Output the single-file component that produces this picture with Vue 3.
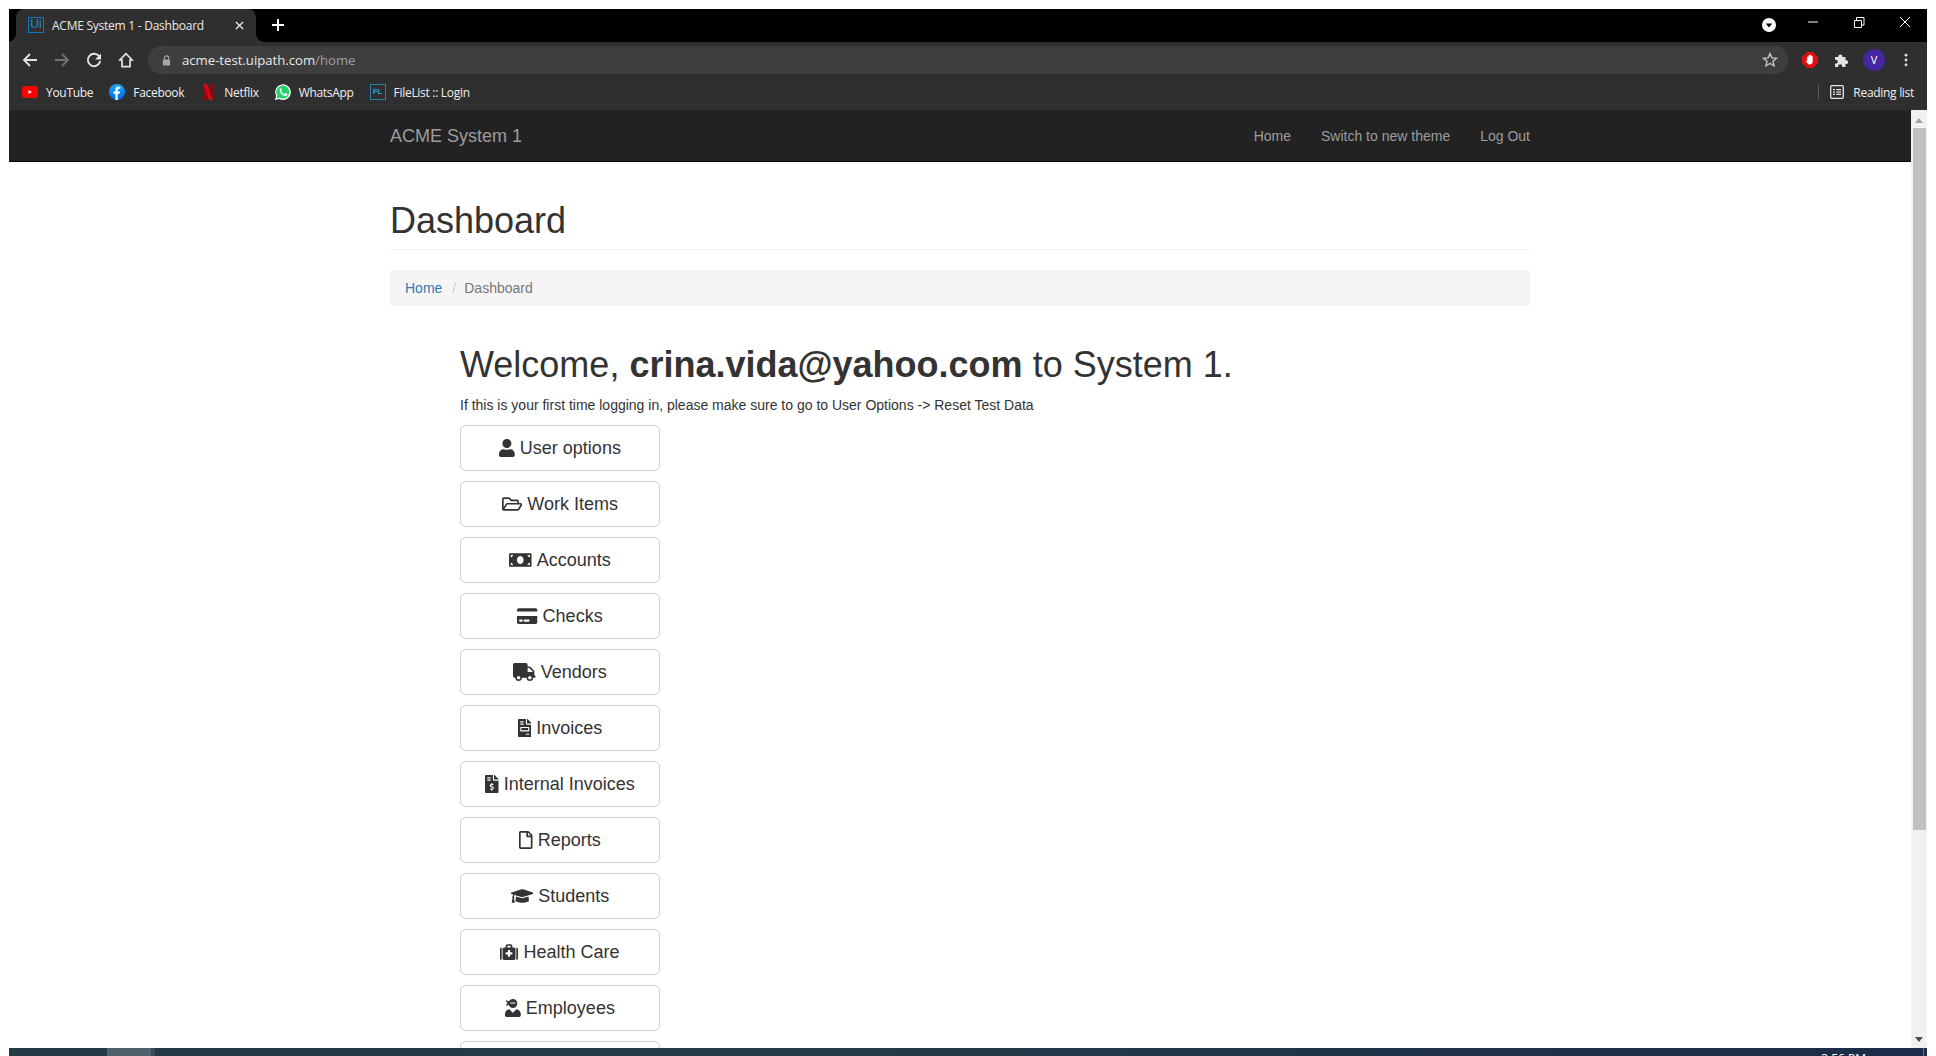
<script setup>
const icons = {
  user: { v: '0 0 448 512', d: 'M224 256c70.7 0 128-57.3 128-128S294.7 0 224 0 96 57.3 96 128s57.3 128 128 128zm89.6 32h-16.7c-22.2 10.2-46.9 16-72.9 16s-50.6-5.8-72.9-16h-16.7C60.2 288 0 348.2 0 422.4V464c0 26.5 21.5 48 48 48h352c26.5 0 48-21.5 48-48v-41.6c0-74.2-60.2-134.4-134.4-134.4z' },
  folder: { v: '0 0 576 512', d: 'M527.9 224H480v-48c0-26.5-21.5-48-48-48H272l-64-64H48C21.5 64 0 85.5 0 112v288c0 26.5 21.5 48 48 48h400c16.5 0 31.9-8.5 40.7-22.6l79.9-128c20-31.9-3-73.4-40.7-73.4zM48 118c0-3.3 2.7-6 6-6h134.1l64 64H426c3.3 0 6 2.7 6 6v42H152c-16.8 0-32.4 8.8-41.1 23.2L48 351.4zm400 282H72l77.2-128H528z' },
  money: { v: '0 0 640 512', d: 'M608 64H32C14.33 64 0 78.33 0 96v320c0 17.67 14.33 32 32 32h576c17.67 0 32-14.33 32-32V96c0-17.67-14.33-32-32-32zM48 400v-64c35.35 0 64 28.65 64 64H48zm0-224v-64h64c0 35.35-28.65 64-64 64zm272 192c-53.02 0-96-50.15-96-112 0-61.86 42.98-112 96-112s96 50.14 96 112c0 61.87-43 112-96 112zm272 32h-64c0-35.35 28.65-64 64-64v64zm0-224c-35.35 0-64-28.65-64-64h64v64z' },
  card: { v: '0 0 576 512', d: 'M0 432c0 26.5 21.5 48 48 48h480c26.5 0 48-21.5 48-48V256H0v176zm192-68c0-6.6 5.4-12 12-12h136c6.6 0 12 5.4 12 12v40c0 6.6-5.4 12-12 12H204c-6.6 0-12-5.4-12-12v-40zm-128 0c0-6.6 5.4-12 12-12h72c6.6 0 12 5.4 12 12v40c0 6.6-5.4 12-12 12H76c-6.6 0-12-5.4-12-12v-40zM576 80v48H0V80c0-26.5 21.5-48 48-48h480c26.5 0 48 21.5 48 48z' },
  truck: { v: '0 0 640 512', d: 'M624 352h-16V243.9c0-12.7-5.1-24.9-14.1-33.9L494 110.1c-9-9-21.2-14.1-33.9-14.1H416V48c0-26.5-21.5-48-48-48H48C21.5 0 0 21.5 0 48v320c0 26.5 21.5 48 48 48h16c0 53 43 96 96 96s96-43 96-96h128c0 53 43 96 96 96s96-43 96-96h48c8.8 0 16-7.2 16-16v-32c0-8.8-7.2-16-16-16zM160 464c-26.5 0-48-21.5-48-48s21.5-48 48-48 48 21.5 48 48-21.5 48-48 48zm320 0c-26.5 0-48-21.5-48-48s21.5-48 48-48 48 21.5 48 48-21.5 48-48 48zm80-208H416V144h44.1l99.9 99.9V256z' },
  invoice: { v: '0 0 384 512', d: 'M288 256H96v64h192v-64zm89-151L279.1 7c-4.5-4.5-10.6-7-17-7H256v128h128v-6.1c0-6.3-2.5-12.4-7-16.9zm-153 31V0H24C10.7 0 0 10.7 0 24v464c0 13.3 10.7 24 24 24h336c13.3 0 24-10.7 24-24V160H248c-13.2 0-24-10.8-24-24zM64 72c0-4.42 3.58-8 8-8h80c4.42 0 8 3.58 8 8v16c0 4.42-3.58 8-8 8H72c-4.42 0-8-3.58-8-8V72zm0 64c0-4.42 3.58-8 8-8h80c4.42 0 8 3.58 8 8v16c0 4.42-3.58 8-8 8H72c-4.42 0-8-3.58-8-8v-16zm256 304c0 4.42-3.58 8-8 8h-80c-4.42 0-8-3.58-8-8v-16c0-4.42 3.58-8 8-8h80c4.42 0 8 3.58 8 8v16zm0-200v96c0 8.84-7.16 16-16 16H80c-8.84 0-16-7.16-16-16v-96c0-8.84 7.16-16 16-16h224c8.84 0 16 7.16 16 16z' },
  invoiceDollar: { v: '0 0 384 512', d: 'M377 105L279.1 7c-4.5-4.5-10.6-7-17-7H256v128h128v-6.1c0-6.3-2.5-12.4-7-16.9zm-153 31V0H24C10.7 0 0 10.7 0 24v464c0 13.3 10.7 24 24 24h336c13.3 0 24-10.7 24-24V160H248c-13.2 0-24-10.8-24-24zM64 72c0-4.42 3.58-8 8-8h80c4.42 0 8 3.58 8 8v16c0 4.42-3.58 8-8 8H72c-4.42 0-8-3.58-8-8V72zm0 80v-16c0-4.42 3.58-8 8-8h80c4.42 0 8 3.58 8 8v16c0 4.42-3.58 8-8 8H72c-4.42 0-8-3.58-8-8zm144 263.88V440c0 4.42-3.58 8-8 8h-16c-4.42 0-8-3.58-8-8v-24.29c-11.29-.58-22.27-4.52-31.37-11.35-3.9-2.93-4.1-8.77-.57-12.14l11.75-11.21c2.77-2.64 6.89-2.76 10.13-.73 3.87 2.42 8.26 3.72 12.82 3.72h28.11c6.5 0 11.8-5.92 11.8-13.19 0-5.95-3.61-11.19-8.77-12.73l-45-13.5c-18.59-5.58-31.58-23.42-31.58-43.39 0-24.52 19.05-44.44 42.67-45.07V232c0-4.42 3.58-8 8-8h16c4.42 0 8 3.58 8 8v24.29c11.29.58 22.27 4.51 31.37 11.35 3.9 2.93 4.1 8.77.57 12.14l-11.75 11.21c-2.77 2.64-6.89 2.76-10.13.73-3.87-2.43-8.26-3.72-12.82-3.72h-28.11c-6.5 0-11.8 5.92-11.8 13.19 0 5.95 3.61 11.19 8.77 12.73l45 13.5c18.59 5.58 31.58 23.42 31.58 43.39 0 24.53-19.05 44.44-42.67 45.07z' },
  file: { v: '0 0 384 512', d: 'M369.9 97.9L286 14C277 5 264.8-.1 252.1-.1H48C21.5 0 0 21.5 0 48v416c0 26.5 21.5 48 48 48h288c26.5 0 48-21.5 48-48V131.9c0-12.7-5.1-25-14.1-34zM332.1 128H256V51.9l76.1 76.1zM48 464V48h160v104c0 13.3 10.7 24 24 24h104v288H48z' },
  cap: { v: '0 0 640 512', d: 'M622.34 153.2L343.4 67.5c-15.2-4.67-31.6-4.67-46.79 0L17.66 153.2c-23.54 7.23-23.54 38.36 0 45.59l48.63 14.94c-10.67 13.19-17.23 29.28-17.88 46.9C38.78 266.15 32 276.11 32 288c0 10.78 5.68 19.85 13.86 25.65L20.33 428.53C18.11 438.52 25.71 448 35.94 448h56.11c10.24 0 17.84-9.48 15.62-19.47L82.14 313.65C90.32 307.85 96 298.78 96 288c0-11.57-6.47-21.25-15.66-26.87.76-15.02 8.44-28.3 20.69-36.72L296.6 284.5c9.06 2.78 26.44 6.25 46.79 0l278.95-85.7c23.55-7.24 23.55-38.36 0-45.6zM352.79 315.09c-28.53 8.76-52.84 3.92-65.59 0l-145.02-44.55L128 384c0 35.35 85.96 64 192 64s192-28.65 192-64l-14.18-113.47-145.03 44.56z' },
  care: { v: '0 0 512 512', d: 'M0 176c0-26 20-48 48-48v352c-28 0-48-22-48-48zM464 128c28 0 48 22 48 48v256c0 26-20 48-48 48zM160 128V80c0-26 22-48 48-48h96c26 0 48 22 48 48v48h48c20 0 40 20 40 48v256c0 28-20 48-40 48H112c-20 0-40-20-40-48V176c0-28 20-48 40-48zm48-48v48h96V80zm16 120v64h-64v64h64v64h64v-64h64v-64h-64v-64z' },
  ninja: { v: '0 0 448 512', d: 'M325.4 289.2L224 390.6 122.6 289.2C54 295.3 0 352.2 0 422.4V464c0 26.5 21.5 48 48 48h352c26.5 0 48-21.5 48-48v-41.6c0-70.2-54-127.1-122.6-133.2zM32 192c27.3 0 51.8-11.5 69.2-29.7 15.1 53.9 64 93.7 122.8 93.7 70.7 0 128-57.3 128-128S294.7 0 224 0c-50.4 0-93.6 29.4-114.5 71.8C92.1 47.8 64 32 32 32c0 33.4 17.1 62.8 43.1 80-26 17.2-43.1 46.6-43.1 80zm144-96h96c17.7 0 32 14.3 32 32H144c0-17.7 14.3-32 32-32z' }
}
const buttons = [
  { label: 'User options', icon: 'user' },
  { label: 'Work Items', icon: 'folder' },
  { label: 'Accounts', icon: 'money' },
  { label: 'Checks', icon: 'card' },
  { label: 'Vendors', icon: 'truck' },
  { label: 'Invoices', icon: 'invoice' },
  { label: 'Internal Invoices', icon: 'invoiceDollar' },
  { label: 'Reports', icon: 'file' },
  { label: 'Students', icon: 'cap' },
  { label: 'Health Care', icon: 'care' },
  { label: 'Employees', icon: 'ninja' },
  { label: '', icon: null }
]
</script>

<template>
  <div class="window">
    <div class="tabstrip">
      <div class="tab">
        <span class="favicon">Ui</span>
        <span class="tab-title">ACME System 1 - Dashboard</span>
        <svg class="tab-close" viewBox="0 0 10 10"><path d="M1 1l8 8M9 1l-8 8" /></svg>
      </div>
      <svg class="newtab" viewBox="0 0 12 12"><path d="M6 0v12M0 6h12" /></svg>
      <div class="strip-right">
        <svg class="tabsearch" viewBox="0 0 14 14"><circle cx="7" cy="7" r="7" fill="#fff" /><path d="M3.8 5.6h6.4L7 9.4z" fill="#000" /></svg>
        <svg class="win-btn" viewBox="-1 0 46 30"><path d="M18 13h10" stroke="#fff" fill="none" /></svg>
        <svg class="win-btn" viewBox="-1 0 46 30"><path d="M18.5 11.5h7v7h-7zM20.5 11.5v-3h7.500v7.500h-2.500" stroke="#fff" fill="none" /></svg>
        <svg class="win-btn" viewBox="-1 0 46 30"><path d="M18 8l10 10M28 8L18 18" stroke="#fff" fill="none" /></svg>
      </div>
    </div>

    <div class="toolbar">
      <svg class="nav" viewBox="0 0 16 16"><path d="M15 8H2.500M8 2L2 8l6 6" fill="none" stroke="#e4e4e4" stroke-width="1.800" /></svg>
      <svg class="nav" viewBox="0 0 16 16"><path d="M1 8h12.500M8 2l6 6-6 6" fill="none" stroke="#737373" stroke-width="1.800" /></svg>
      <svg class="nav" viewBox="0 0 16 16"><path d="M13.300 4.600A6.200 6.200 0 1 0 14.200 9" fill="none" stroke="#e4e4e4" stroke-width="1.900" /><path d="M15 1.500v6H9z" fill="#e4e4e4" /></svg>
      <svg class="nav" viewBox="0 0 16 16"><path d="M8 1.600L1.800 8H4v6.600h8V8h2.200z" fill="none" stroke="#e4e4e4" stroke-width="1.700" stroke-linejoin="miter" /></svg>
      <div class="omnibox">
        <svg class="lock" viewBox="0 0 10 12"><path d="M2.500 5V3.400a2.500 2.500 0 0 1 5 0V5" fill="none" stroke="#a8a8a8" stroke-width="1.300" /><rect x="1" y="5" width="8" height="6.500" rx="1" fill="#a8a8a8" /></svg>
        <span class="url">acme-test.uipath.com<span class="url-path">/home</span></span>
        <svg class="star" viewBox="0 0 16 16"><path d="M8 1.600l1.900 4.300 4.600.4-3.500 3 1.100 4.600L8 11.500l-4.100 2.400L5 9.300l-3.500-3 4.600-.4z" fill="none" stroke="#c4c4c4" stroke-width="1.400" /></svg>
      </div>
      <svg class="ext-stop" viewBox="0 0 16 16"><path d="M5 0h6l5 5v6l-5 5H5l-5-5V5z" fill="#e0100f" /><path d="M5.200 9.200V5.200a.7.700 0 0 1 1.400 0V3.800a.7.700 0 0 1 1.400 0v-.3a.7.700 0 0 1 1.400 0v1a.7.700 0 0 1 1.300 0V9c0 2-1 3.500-3 3.500-1.500 0-2.300-1-3.500-3-.4-.7.5-1.400 1-.8z" fill="#fff" /></svg>
      <svg class="ext-puzzle" viewBox="0 0 16 16"><path d="M1 5h3.400a2 2 0 1 1 3.800 0h3.300v3.200a2 2 0 1 1 0 3.800V15H8a2 2 0 1 0-3.600 0H1v-3.500a2 2 0 1 0 0-3.700z" fill="#e4e4e4" /></svg>
      <span class="avatar">V</span>
      <svg class="kebab" viewBox="0 0 4 16"><circle cx="2" cy="2.500" r="1.600" /><circle cx="2" cy="8" r="1.600" /><circle cx="2" cy="13.500" r="1.600" /></svg>
    </div>

    <div class="bookmarks">
      <a class="bm">
        <svg viewBox="0 0 16 16"><rect y="2" width="16" height="12" rx="3" fill="#f00" /><path d="M6.500 6v4l3.500-2z" fill="#fff" /></svg>YouTube
      </a>
      <a class="bm">
        <svg viewBox="0 0 16 16"><defs><linearGradient id="fbg" x1="0" y1="0" x2="0" y2="1"><stop offset="0" stop-color="#18acfe" /><stop offset="1" stop-color="#0163e0" /></linearGradient></defs><circle cx="8" cy="8" r="8" fill="url(#fbg)" /><path d="M8.800 16V9.800h2l.4-2.300H8.800V6c0-.7.300-1.200 1.200-1.200h1.300v-2c-.4 0-1.100-.2-1.800-.2-1.900 0-3.100 1.100-3.100 3.200v1.700H4.400v2.300h2V16z" fill="#fff" /></svg>Facebook
      </a>
      <a class="bm">
        <svg viewBox="0 0 16 16"><path d="M3 0h4v16l-4 .3z" fill="#8f0610" /><path d="M9 0h4v16.300l-4-.3z" fill="#8f0610" /><path d="M3 0h4l6 16.300-4-.3z" fill="#cf0a14" /></svg>Netflix
      </a>
      <a class="bm">
        <svg viewBox="0 0 16 16"><path d="M0 16l1.100-4.300A7.800 7.800 0 1 1 4.300 15z" fill="#fff" /><path d="M1.500 14.500l.8-3A6.500 6.500 0 1 1 4.600 13.700z" fill="#25d366" /><path d="M6 4.300c-.5 0-1.300.6-1.300 1.900 0 1.500 1.100 3 1.400 3.400.4.500 2 2.500 4.100 2.500 1.300 0 2.100-.9 2.100-1.700 0-.4 0-.5-.2-.6l-1.600-.8c-.2 0-.3 0-.5.200l-.6.800c-.1.100-.3.100-.5 0-.8-.4-1.900-1.300-2.500-2.500 0-.2 0-.3.100-.4l.4-.5c.1-.2.100-.3 0-.5L6.300 4.600c-.1-.2-.2-.3-.3-.3z" fill="#fff" /></svg>WhatsApp
      </a>
      <a class="bm">
        <span class="fl">FL</span>FileList :: Login
      </a>
      <div class="reading">
        <svg viewBox="0 0 14 14"><rect x=".7" y=".7" width="12.600" height="12.600" rx="1" fill="none" stroke="#e4e4e4" stroke-width="1.300" /><path d="M3 4h2v1.300H3zM6.300 4H11v1.300H6.300zM3 6.400h2v1.300H3zM6.300 6.400H11v1.300H6.300zM3 8.800h2v1.300H3zM6.300 8.800H11v1.300H6.300z" fill="#e4e4e4" /></svg>
        <span>Reading list</span>
      </div>
    </div>

    <div class="viewport">
      <div class="page">
        <nav class="navbar">
          <div class="container nav-inner">
            <span class="brand">ACME System 1</span>
            <div class="nav-links">
              <a>Home</a>
              <a>Switch to new theme</a>
              <a>Log Out</a>
            </div>
          </div>
        </nav>
        <div class="container main">
          <h1 class="page-title">Dashboard</h1>
          <div class="breadcrumb">
            <a>Home</a>
            <span class="sep">/</span>
            <span class="crumb">Dashboard</span>
          </div>
          <div class="welcome">
            <h2>Welcome, <b>crina.vida@yahoo.com</b> to System 1.</h2>
            <p>If this is your first time logging in, please make sure to go to User Options -&gt; Reset Test Data</p>
            <div class="btn" v-for="(b, i) in buttons" :key="i">
              <svg v-if="b.icon" class="ico" :viewBox="icons[b.icon].v"><path :d="icons[b.icon].d" fill-rule="evenodd" /></svg>
              <span v-if="b.label">{{ b.label }}</span>
            </div>
          </div>
        </div>
      </div>
      <div class="scrollbar">
        <svg class="arrow arrow-up" viewBox="0 0 8 5"><path d="M0 5l4-5 4 5z" /></svg>
        <div class="thumb"></div>
        <svg class="arrow" viewBox="0 0 8 5"><path d="M0 0l4 5 4-5z" /></svg>
      </div>
    </div>

    <div class="taskbar">
      <div class="task-item"></div>
      <div class="task-sep"></div>
      <div class="task-clock">3:56 PM</div>
      <div class="task-line"></div>
    </div>
  </div>
</template>

<style scoped>
.window {
  margin: 9px 9px 0;
  height: 1047px;
  display: flex;
  flex-direction: column;
  overflow: hidden;
  font-family: "Open Sans", "Noto Sans", sans-serif;
}
.tabstrip {
  height: 33px;
  background: #000;
  display: flex;
  align-items: flex-end;
  padding-left: 7px;
  flex: none;
}
.tab {
  width: 240px;
  height: 33px;
  background: #2f2f2f;
  border-radius: 8px 8px 0 0;
  display: flex;
  align-items: center;
  padding: 0 12px 1px;
  box-sizing: border-box;
  color: #e8e8e8;
  font-size: 12px;
  letter-spacing: -0.25px;
  position: relative;
}
.tab::before,
.tab::after {
  content: "";
  position: absolute;
  bottom: 0;
  width: 8px;
  height: 8px;
}
.tab::before {
  left: -8px;
  background: radial-gradient(circle at 0 0, #000 7.5px, #2f2f2f 8px);
}
.tab::after {
  right: -8px;
  background: radial-gradient(circle at 100% 0, #000 7.5px, #2f2f2f 8px);
}
.favicon {
  width: 16px;
  height: 16px;
  border: 1.500px solid #0f78bc;
  box-sizing: border-box;
  color: #1b8fdc;
  font: 400 12px/13px "Liberation Sans", sans-serif;
  letter-spacing: 0;
  text-align: center;
  flex: none;
}
.tab-title {
  margin-left: 8px;
  flex: 1;
  white-space: nowrap;
}
.tab-close {
  width: 9px;
  height: 9px;
  flex: none;
  fill: none;
  stroke: #e8e8e8;
  stroke-width: 1.500;
}
.newtab {
  width: 12px;
  height: 12px;
  margin: 0 0 11px 16px;
  fill: none;
  stroke: #fff;
  stroke-width: 2;
}
.strip-right {
  margin-left: auto;
  height: 100%;
  display: flex;
  align-items: flex-start;
}
.tabsearch {
  width: 14px;
  height: 14px;
  margin: 9px 13px 0 0;
}
.win-btn {
  width: 46px;
  height: 30px;
}
.toolbar {
  height: 34px;
  flex: none;
  background: #2f2f2f;
  display: flex;
  align-items: center;
  padding: 2px 0 0 13px;
  box-sizing: border-box;
}
.nav {
  width: 16px;
  height: 16px;
  flex: none;
  margin-right: 16px;
}
.omnibox {
  width: 1640px;
  height: 28px;
  margin: 0 0 0 -2px;
  background: #3e3e3e;
  border-radius: 14px;
  display: flex;
  align-items: center;
  padding: 0 10px 0 14px;
  box-sizing: border-box;
  flex: none;
}
.lock {
  width: 9px;
  height: 11px;
}
.url {
  margin-left: 11px;
  font-size: 13.150px;
  color: #e8e8e8;
  flex: 1;
}
.url-path {
  color: #a0a0a0;
}
.star {
  width: 16px;
  height: 16px;
}
.ext-stop {
  width: 16px;
  height: 16px;
  margin-left: 14px;
  flex: none;
}
.ext-puzzle {
  width: 16px;
  height: 16px;
  margin-left: 16px;
  flex: none;
}
.avatar {
  width: 22px;
  height: 22px;
  margin-left: 13px;
  border-radius: 50%;
  background: #4527a0;
  color: #fff;
  font-size: 11px;
  line-height: 22px;
  text-align: center;
  flex: none;
}
.kebab {
  width: 4px;
  height: 14px;
  margin-left: 19px;
  fill: #e4e4e4;
  flex: none;
}
.bookmarks {
  height: 34px;
  flex: none;
  background: #2f2f2f;
  display: flex;
  align-items: center;
  padding: 0 0 2px 13px;
  box-sizing: border-box;
  gap: 16px;
  color: #f0f0f0;
  font-size: 12px;
  letter-spacing: -0.3px;
}
.bm {
  display: flex;
  align-items: center;
  gap: 8px;
  white-space: nowrap;
}
.bm svg {
  width: 16px;
  height: 16px;
}
.fl {
  width: 16px;
  height: 16px;
  box-sizing: border-box;
  border: 1px solid #2a7ea8;
  color: #2f9fd6;
  font: 700 8px/14px "Liberation Sans", sans-serif;
  letter-spacing: 0;
  text-align: center;
}
.reading {
  margin-left: auto;
  padding-left: 11px;
  margin-right: 13px;
  border-left: 1px solid #5a5a5a;
  height: 16px;
  display: flex;
  align-items: center;
  gap: 9px;
}
.reading svg {
  width: 14px;
  height: 14px;
}
.viewport {
  flex: 1;
  min-height: 0;
  display: flex;
  overflow: hidden;
  background: #fff;
}
.page {
  flex: 1;
  min-width: 0;
  overflow: hidden;
  font-family: "Liberation Sans", Arial, sans-serif;
  color: #333;
  font-size: 14px;
  line-height: 20px;
}
.container {
  width: 1140px;
  margin: 0 auto;
}
.navbar {
  height: 52px;
  background: #222;
  border-bottom: 1px solid #080808;
  box-sizing: border-box;
}
.nav-inner {
  height: 51px;
  display: flex;
  align-items: center;
  justify-content: space-between;
}
.brand {
  color: #9d9d9d;
  font-size: 18px;
}
.nav-links {
  display: flex;
  gap: 30px;
  color: #9d9d9d;
}
.page-title {
  margin: 39px 0 20px;
  padding-bottom: 8px;
  border-bottom: 1px solid #eee;
  font-size: 36px;
  font-weight: 500;
  line-height: 40px;
  color: #333;
}
.breadcrumb {
  height: 36px;
  padding: 8px 15px;
  box-sizing: border-box;
  background: #f5f5f5;
  border-radius: 4px;
  margin-bottom: 20px;
  display: flex;
}
.breadcrumb a {
  color: #337ab7;
}
.sep {
  color: #ccc;
  padding: 0 8px 0 10px;
}
.crumb {
  color: #777;
}
.welcome {
  padding: 19px 0 0 70px;
}
.welcome h2 {
  margin: 0 0 10px;
  font-size: 36px;
  font-weight: 500;
  line-height: 40px;
}
.welcome h2 b {
  font-weight: 700;
}
.welcome p {
  margin: 0 0 10px;
}
.btn {
  width: 200px;
  height: 46px;
  margin-bottom: 10px;
  box-sizing: border-box;
  border: 1px solid #ccc;
  border-radius: 6px;
  display: flex;
  align-items: center;
  justify-content: center;
  gap: 5px;
  font-size: 18px;
  color: #333;
}
.ico {
  height: 18px;
  fill: #333;
  flex: none;
}
.scrollbar {
  width: 16px;
  flex: none;
  background: #f1f1f1;
  display: flex;
  flex-direction: column;
  align-items: center;
  padding: 8px 0 6px;
  box-sizing: border-box;
}
.arrow {
  width: 8px;
  height: 5px;
  fill: #505050;
  flex: none;
}
.arrow-up {
  fill: #a3a3a3;
}
.thumb {
  width: 13px;
  height: 702px;
  background: #c1c1c1;
  margin: 5px 0 auto 1px;
}
.taskbar {
  height: 8px;
  flex: none;
  background: linear-gradient(90deg, #223a44 0%, #243c48 40%, #1c2c48 100%);
  display: flex;
  overflow: hidden;
}
.task-item {
  width: 44px;
  margin-left: 98px;
  background: #4e626c;
}
.task-sep {
  width: 4px;
  background: #3b4a56;
}
.task-clock {
  margin-left: auto;
  margin-right: 57px;
  color: #fff;
  font-size: 12px;
  line-height: 16px;
  margin-top: 3px;
  white-space: nowrap;
}
.task-line {
  width: 1px;
  margin-right: 3px;
  background: #6a7686;
}
</style>
